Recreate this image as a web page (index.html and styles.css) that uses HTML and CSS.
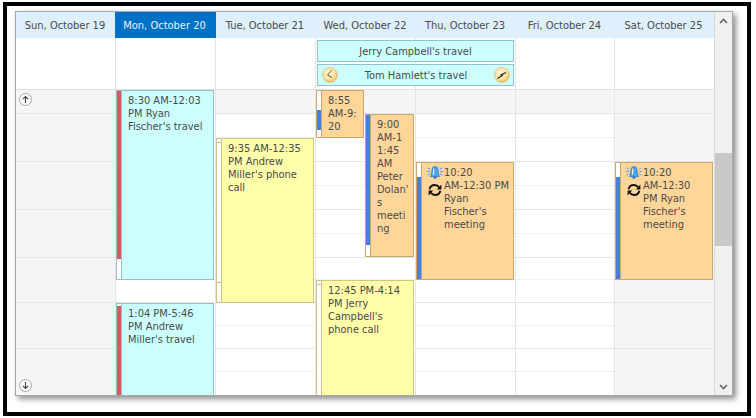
FILE: index.html
```html
<!DOCTYPE html>
<html lang="en">
<head>
    <meta charset="UTF-8">
    <meta name="viewport" content="width=device-width, initial-scale=1.0">
    <title>Week schedule</title>
    <link rel="stylesheet" href="styles.css">
</head>
<body>
    <svg class="defs" width="0" height="0">
        <defs>
            <radialGradient id="clockfill" cx="40%" cy="35%" r="70%">
                <stop offset="0" stop-color="#fff6da"/>
                <stop offset="0.65" stop-color="#fde09a"/>
                <stop offset="1" stop-color="#eeb65a"/>
            </radialGradient>
            <symbol id="bell" viewBox="0 0 16 13">
                <path d="M8 0.6 C5.6 0.6 5 2.6 4.9 5 C4.8 8 4 9.4 3.4 10.6 L12.6 10.6 C12 9.4 11.2 8 11.1 5 C11 2.6 10.4 0.6 8 0.6 Z" fill="#4aa6f5" stroke="#1a6fd0" stroke-width="0.7"/>
                <rect x="6.6" y="10.6" width="2.8" height="2" fill="#1a6fd0"/>
                <path d="M6.8 2.6 L6.4 8.6" stroke="#e2f4ff" stroke-width="1.2"/>
                <path d="M0 5.5 H2.8 M0.6 1.8 L3.2 3.4 M0.6 9.2 L3.2 7.6 M16 5.5 H13.2 M15.4 1.8 L12.8 3.4 M15.4 9.2 L12.8 7.6" stroke="#3f9bf0" stroke-width="0.9" fill="none"/>
            </symbol>
            <symbol id="sync" viewBox="0 0 14 14">
                <path d="M1.6 6.2 C2.2 3.4 4.4 2 6.8 2 C8.8 2 10.2 2.8 11.2 4.2" fill="none" stroke="#111" stroke-width="1.9"/>
                <path d="M13.4 1.6 L13.4 6.4 L8.8 6.4 Z" fill="#111"/>
                <path d="M12.4 7.8 C11.8 10.6 9.6 12 7.2 12 C5.2 12 3.8 11.2 2.8 9.8" fill="none" stroke="#111" stroke-width="1.9"/>
                <path d="M0.6 12.4 L0.6 7.6 L5.2 7.6 Z" fill="#111"/>
            </symbol>
        </defs>
    </svg>

    <div class="frame">
        <div class="scheduler">
            <div class="calendar">

                <div class="week header">
                    <div class="dayname">Sun, October 19</div>
                    <div class="dayname selected">Mon, October 20</div>
                    <div class="dayname">Tue, October 21</div>
                    <div class="dayname">Wed, October 22</div>
                    <div class="dayname">Thu, October 23</div>
                    <div class="dayname">Fri, October 24</div>
                    <div class="dayname">Sat, October 25</div>
                </div>

                <div class="week allday">
                    <div class="allcell c1"></div>
                    <div class="allcell c2"></div>
                    <div class="allcell c3"></div>
                    <div class="allcell c4"></div>
                    <div class="allcell c5"></div>
                    <div class="allcell c6"></div>
                    <div class="allcell c7"></div>
                    <div class="bar bar1">Jerry Campbell's travel</div>
                    <div class="bar bar2">
                        <svg class="clock" width="16" height="16" viewBox="0 0 16 16">
                            <circle cx="8" cy="8" r="7.4" fill="url(#clockfill)" stroke="#dfa850" stroke-width="0.6"/>
                            <path d="M9.5 3.5 L5.5 8 L10 10.5" fill="none" stroke="#444" stroke-width="0.9"/>
                        </svg>
                        <span>Tom Hamlett's travel</span>
                        <svg class="clock" width="16" height="16" viewBox="0 0 16 16">
                            <circle cx="8" cy="8" r="7.4" fill="url(#clockfill)" stroke="#dfa850" stroke-width="0.6"/>
                            <path d="M3.5 11.5 L9 8 M6.5 8 L12 5.5" fill="none" stroke="#222" stroke-width="1.1"/>
                        </svg>
                    </div>
                </div>

                <div class="week times">
                    <div class="day off">
                        <div class="slot"></div><div class="slot"></div><div class="slot"></div><div class="slot"></div><div class="slot"></div><div class="slot"></div><div class="slot"></div><div class="slot"></div><div class="slot"></div><div class="slot"></div><div class="slot"></div><div class="slot"></div><div class="slot"></div>
                        <button class="more up">
                            <svg width="13" height="13" viewBox="0 0 13 13"><circle cx="6.5" cy="6.5" r="6" fill="#fbfbfb" stroke="#a8a8a8"/><path d="M6.5 10 V3.5 M3.8 6.2 L6.5 3.5 L9.2 6.2" fill="none" stroke="#444" stroke-width="1.1"/></svg>
                        </button>
                        <button class="more down">
                            <svg width="13" height="13" viewBox="0 0 13 13"><circle cx="6.5" cy="6.5" r="6" fill="#fbfbfb" stroke="#a8a8a8"/><path d="M6.5 3 V9.5 M3.8 6.8 L6.5 9.5 L9.2 6.8" fill="none" stroke="#444" stroke-width="1.1"/></svg>
                        </button>
                    </div>

                    <div class="day">
                        <div class="slot"></div><div class="slot"></div><div class="slot"></div><div class="slot"></div><div class="slot"></div><div class="slot"></div><div class="slot"></div><div class="slot"></div><div class="slot"></div><div class="slot"></div><div class="slot"></div><div class="slot"></div><div class="slot"></div>
                        <div class="event travel ev-ryan-travel"><div class="strip"></div><div class="body">8:30 AM-12:03<br>PM Ryan<br>Fischer's travel</div></div>
                        <div class="event travel ev-andrew-travel"><div class="strip"></div><div class="body">1:04 PM-5:46<br>PM Andrew<br>Miller's travel</div></div>
                    </div>

                    <div class="day">
                        <div class="slot"></div><div class="slot"></div><div class="slot"></div><div class="slot"></div><div class="slot"></div><div class="slot"></div><div class="slot"></div><div class="slot"></div><div class="slot"></div><div class="slot"></div><div class="slot"></div><div class="slot"></div><div class="slot"></div>
                        <div class="event call ev-andrew-call"><div class="strip"></div><div class="body">9:35 AM-12:35<br>PM Andrew<br>Miller's phone<br>call</div></div>
                    </div>

                    <div class="day">
                        <div class="slot"></div><div class="slot"></div><div class="slot"></div><div class="slot"></div><div class="slot"></div><div class="slot"></div><div class="slot"></div><div class="slot"></div><div class="slot"></div><div class="slot"></div><div class="slot"></div><div class="slot"></div><div class="slot"></div>
                        <div class="event meeting ev-short"><div class="strip"></div><div class="body">8:55<br>AM-9:<br>20</div></div>
                        <div class="event meeting ev-peter"><div class="strip"></div><div class="body">9:00<br>AM-1<br>1:45<br>AM<br>Peter<br>Dolan'<br>s<br>meeti<br>ng</div></div>
                        <div class="event call ev-jerry-call"><div class="strip"></div><div class="body">12:45 PM-4:14<br>PM Jerry<br>Campbell's<br>phone call</div></div>
                    </div>

                    <div class="day">
                        <div class="slot"></div><div class="slot"></div><div class="slot"></div><div class="slot"></div><div class="slot"></div><div class="slot"></div><div class="slot"></div><div class="slot"></div><div class="slot"></div><div class="slot"></div><div class="slot"></div><div class="slot"></div><div class="slot"></div>
                        <div class="event meeting ev-recurring">
                            <div class="strip"></div>
                            <div class="body withicons">
                                <div class="icons">
                                    <svg width="16" height="13"><use href="#bell"/></svg>
                                    <svg width="14" height="14"><use href="#sync"/></svg>
                                </div>
                                <div>10:20<br>AM-12:30 PM<br>Ryan<br>Fischer's<br>meeting</div>
                            </div>
                        </div>
                    </div>

                    <div class="day">
                        <div class="slot"></div><div class="slot"></div><div class="slot"></div><div class="slot"></div><div class="slot"></div><div class="slot"></div><div class="slot"></div><div class="slot"></div><div class="slot"></div><div class="slot"></div><div class="slot"></div><div class="slot"></div><div class="slot"></div>
                    </div>

                    <div class="day off">
                        <div class="slot"></div><div class="slot"></div><div class="slot"></div><div class="slot"></div><div class="slot"></div><div class="slot"></div><div class="slot"></div><div class="slot"></div><div class="slot"></div><div class="slot"></div><div class="slot"></div><div class="slot"></div><div class="slot"></div>
                        <div class="event meeting ev-recurring ev-sat">
                            <div class="strip"></div>
                            <div class="body withicons">
                                <div class="icons">
                                    <svg width="16" height="13"><use href="#bell"/></svg>
                                    <svg width="14" height="14"><use href="#sync"/></svg>
                                </div>
                                <div>10:20<br>AM-12:30<br>PM Ryan<br>Fischer's<br>meeting</div>
                            </div>
                        </div>
                    </div>
                </div>
            </div>

            <div class="scrollbar">
                <div class="scrollbtn">
                    <svg width="9" height="6" viewBox="0 0 9 6"><path d="M1 5 L4.5 1.5 L8 5" fill="none" stroke="#666" stroke-width="1.6"/></svg>
                </div>
                <div class="track"><div class="thumb"></div></div>
                <div class="scrollbtn">
                    <svg width="9" height="6" viewBox="0 0 9 6"><path d="M1 1 L4.5 4.5 L8 1" fill="none" stroke="#666" stroke-width="1.6"/></svg>
                </div>
            </div>
        </div>
    </div>
</body>
</html>
```

FILE: styles.css
```css
* {
    box-sizing: border-box;
    margin: 0;
}

body {
    background-color: #fff;
    font-family: 'DejaVu Sans Condensed', 'DejaVu Sans', sans-serif;
    font-size: 11px;
    line-height: 13px;
    color: #4a4a4a;
    overflow: hidden;
}

.defs {
    display: block;
    height: 0;
}

.frame {
    width: 748px;
    height: 414px;
    margin: 2px 0 0 3px;
    padding: 5px 0 0 8px;
    border: 4px solid #000;
    background-color: #fff;
}

.scheduler {
    display: flex;
    width: 718px;
    height: 385px;
    border: 1px solid #a8a8a8;
    box-shadow: 3px 3px 6px rgba(0, 0, 0, 0.45);
}

.calendar {
    width: 698px;
}

.week {
    display: grid;
    grid-template-columns: 100px 100px 100px 100px 100px 99px 99px;
}

/* header */

.header {
    height: 26px;
    background-color: #def0fb;
}

.dayname {
    display: flex;
    align-items: center;
    justify-content: center;
    padding-right: 2px;
}

.selected {
    margin-left: -1px;
    background-color: #0071c5;
    color: #e6f3fc;
}

/* all day area */

.allday {
    height: 52px;
    grid-template-rows: 24px 24px 4px;
}

.allcell {
    grid-row: 1 / 4;
    border-right: 1px solid #e6e6e6;
    border-bottom: 1px solid #e0e0e0;
}

.c1 { grid-column: 1; }
.c2 { grid-column: 2; }
.c3 { grid-column: 3; }
.c4 { grid-column: 4; }
.c5 { grid-column: 5; }
.c6 { grid-column: 6; }
.c7 { grid-column: 7; border-right: 0; }

.bar {
    grid-column: 4 / 6;
    display: flex;
    align-items: center;
    justify-content: center;
    height: 22px;
    margin: 2px 2px 0 1px;
    background-color: #ccffff;
    border: 1px solid #98c0c8;
}

.bar1 {
    grid-row: 1;
}

.bar2 {
    grid-row: 2;
    justify-content: space-between;
    padding: 0 3px 0 4px;
}

/* time slots */

.times {
    height: 305px;
    overflow: hidden;
}

.day {
    position: relative;
    display: grid;
    grid-template-rows: repeat(7, 24px) 22px repeat(4, 23px) 23px;
    border-right: 1px solid #e6e6e6;
}

.day:last-child {
    border-right: 0;
}

.slot {
    border-bottom: 1px solid #e6e6e6;
}

.slot:nth-child(even) {
    border-bottom-color: #f0f0f0;
}

.slot:first-child {
    background-color: #f5f5f5;
}

.slot:nth-child(13) {
    border-bottom: 0;
}

.off {
    background-color: #f5f5f5;
}

.more {
    position: absolute;
    left: 3px;
    width: 13px;
    height: 13px;
    padding: 0;
    border: 0;
    background: none;
}

.up {
    top: 3px;
}

.down {
    top: 289px;
}

/* appointments */

.event {
    position: absolute;
    display: flex;
    border: 1px solid;
    overflow: hidden;
}

.strip {
    flex: none;
    width: 5px;
    border-right: 1px solid;
    border-right-color: inherit;
    background-color: #fff;
}

.body {
    padding: 3px 2px 0 6px;
    white-space: nowrap;
}

.withicons {
    display: flex;
    padding: 3px 0 0 4px;
}

.icons {
    display: flex;
    flex-direction: column;
    align-items: center;
    gap: 4px;
    width: 18px;
}

.travel {
    background-color: #ccffff;
    border-color: #98c0c8;
}

.call {
    background-color: #ffffaa;
    border-color: #d0c488;
}

.meeting {
    background-color: #ffd699;
    border-color: #c8a870;
}

.ev-ryan-travel { top: 0; left: 0; width: 98px; height: 190px; }
.ev-andrew-travel { top: 213px; left: 0; width: 98px; height: 100px; }
.ev-andrew-call { top: 48px; left: 0; width: 98px; height: 165px; }
.ev-short { top: 0; left: 0; width: 48px; height: 48px; }
.ev-peter { top: 24px; left: 49px; width: 49px; height: 143px; }
.ev-jerry-call { top: 190px; left: 0; width: 98px; height: 125px; }
.ev-recurring { top: 72px; left: 0; width: 98px; height: 118px; }
.ev-sat { width: 98px; }

.ev-ryan-travel .strip {
    background: linear-gradient(#d65c5c 168px, #fff 168px);
}

.ev-andrew-travel .strip {
    background: linear-gradient(#fff 2px, #d65c5c 2px);
}

.ev-andrew-call .strip {
    background: linear-gradient(#fff 3px, #d0c488 3px, #d0c488 4px, #fff 4px, #fff 143px, #d0c488 143px, #d0c488 144px, #fff 144px);
}

.ev-jerry-call .strip {
    background: linear-gradient(#fff 3px, #d0c488 3px, #d0c488 4px, #fff 4px);
}

.ev-short .strip {
    background: linear-gradient(#fff 19px, #4a7fd8 19px, #4a7fd8 39px, #fff 39px);
}

.ev-peter .strip {
    background: linear-gradient(#4a7fd8 130px, #fff 130px);
}

.ev-recurring .strip {
    background: linear-gradient(#fff 14px, #4a7fd8 14px);
}

/* scrollbar */

.scrollbar {
    display: flex;
    flex-direction: column;
    width: 18px;
    border-left: 1px solid #d8d8d8;
    background-color: #f0f0f0;
}

.scrollbtn {
    flex: none;
    display: flex;
    align-items: center;
    justify-content: center;
    height: 17px;
}

.track {
    flex: 1;
    padding-top: 124px;
}

.thumb {
    height: 93px;
    background-color: #c8c8c8;
}
```
